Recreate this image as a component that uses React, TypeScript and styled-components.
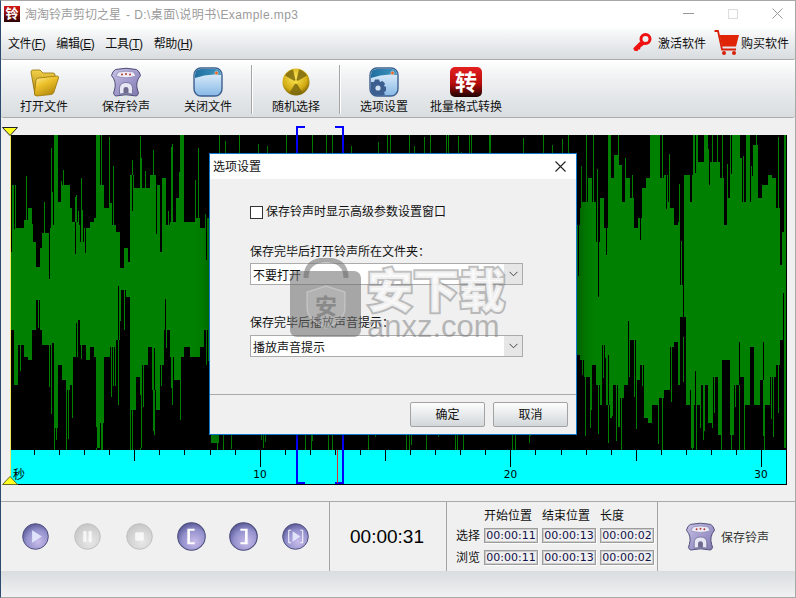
import styled, { createGlobalStyle } from 'styled-components';

const GlobalStyle = createGlobalStyle`
  html, body { margin: 0; padding: 0; background: #f0f0f0; }
  * { box-sizing: border-box; }
  body { font-family: "Liberation Sans", "Noto Sans CJK SC", sans-serif; font-size: 12px; color: #111; }
`

const Window = styled.div`
  position: relative;
  width: 796px;
  height: 598px;
  display: flex;
  flex-direction: column;
  overflow: hidden;
  background: #f0f0f0;
  border: 1px solid #a8a8a8;
  border-left-color: #2c4a6e;
`
const TitleBar = styled.div`
  height: 25px;
  flex: none;
  display: flex;
  align-items: center;
  padding-left: 3px;
  background: #fff;
  color: #9b9b9b;
  font-size: 12px;
`
const Logo = styled.div`
  width: 16px;
  height: 16px;
  margin-right: 5px;
  display: flex;
  align-items: center;
  justify-content: center;
  background: linear-gradient(#d81818, #2a0000);
  color: #fff;
  font-size: 13px;
  font-weight: 700;
  line-height: 16px;
`
const TitlePath = styled.span`
  margin-left: 5px;
  letter-spacing: 0.42px;
`
const WinControls = styled.div`
  margin-left: auto;
  display: flex;
  align-items: center;
  padding-right: 12px;
  gap: 34px;
`
const MenuBar = styled.div`
  height: 34px;
  flex: none;
  display: flex;
  align-items: center;
  padding: 0 6px 0 7px;
  background: linear-gradient(#fff, #f1f3f4 30%, #d9dde0);
  border-bottom: 1px solid #a9abad;
  border-radius: 0 0 2px 2px;
`
const MenuItem = styled.span`
  margin-right: 11px;
  font-size: 12px;
  letter-spacing: -0.4px;
  white-space: nowrap;
  u { text-underline-offset: 1px; }
`
const MenuRight = styled.div`
  margin-left: auto;
  display: flex;
  align-items: center;
`
const LinkIcon = styled.span`
  display: flex;
  margin: 0 ${p => p.$gap ?? 6}px 0 ${p => p.$before ?? 0}px;
`
const ToolBar = styled.div`
  height: 58px;
  flex: none;
  display: flex;
  padding-left: 2px;
  background: linear-gradient(#fff, #eef0f1 35%, #d9dde0);
  border-bottom: 1px solid #a9abad;
  border-radius: 0 0 3px 3px;
`
const ToolButton = styled.div`
  width: 82px;
  display: flex;
  flex-direction: column;
  align-items: center;
  padding-top: 7px;
  font-size: 12px;
  line-height: 16px;
  white-space: nowrap;
  svg { display: block; margin-bottom: 2px; }
`
const ToolSep = styled.div`
  width: 2px;
  margin: 5px 2px 3px;
  background: linear-gradient(90deg, #a4a6a8 50%, #fff 50%);
`
const Stage = styled.div`
  flex: 1;
  padding: 17px 0 0 9px;
`
const Timeline = styled.div`
  position: relative;
  width: 777px;
`
const WaveSvg = styled.svg`
  display: block;
  background: #000;
`
const Ruler = styled.svg`
  display: block;
  background: #00ffff;
  border-right: 1px solid #000;
  border-bottom: 1px solid #000;
  font-family: "DejaVu Sans", sans-serif;
`
const StartLine = styled.div`
  position: absolute;
  left: 0;
  top: 0;
  width: 1px;
  height: 341px;
  background: #f0e860;
`
const Bracket = styled.div`
  position: absolute;
  top: -9px;
  left: ${p => p.$left}px;
  width: 9px;
  height: 358px;
  border: solid #0000ff;
  border-width: 2px 0;
  border-${p => p.$side}-width: 2px;
`
const PlayHead = styled.div`
  position: absolute;
  left: 327px;
  top: 315px;
  width: 1px;
  height: 33px;
  background: #e03030;
`
const Marker = styled.svg`
  position: absolute;
  left: -8px;
  top: ${p => p.$top}px;
`
const Footer = styled.div`
  height: 70px;
  flex: none;
  display: flex;
  border-top: 1px solid #a9a9a9;
`
const Section = styled.div`
  display: flex;
  align-items: center;
  width: ${p => p.$width}px;
  border-right: 1px solid #a4a4a4;
  &:last-child { border-right: 0; flex: 1; }
`
const Transport = styled(Section)`
  padding-left: 8px;
`
const TransportCell = styled.div`
  width: 52px;
  display: flex;
  justify-content: center;
`
const Clock = styled(Section)`
  justify-content: center;
  font-size: 19px;
  color: #000;
  padding-right: 2px;
`
const InfoGrid = styled(Section)`
  display: grid;
  grid-template-columns: 24px 54px 54px 54px;
  grid-template-rows: 18px 19px 19px;
  column-gap: 4px;
  row-gap: 3px;
  align-content: start;
  padding: 3px 0 0 9px;
`
const ColHead = styled.span`
  align-self: end;
  line-height: 14px;
  font-size: 12px;
  white-space: nowrap;
`
const RowHead = styled.span`
  line-height: 19px;
  margin-top: 1px;
  font-size: 12px;
  white-space: nowrap;
`
const TimeField = styled.div`
  display: flex;
  align-items: center;
  justify-content: center;
  font-family: "DejaVu Sans", sans-serif;
  font-size: 11px;
  color: #10104a;
  border: 1px solid #9c9c9c;
  box-shadow: inset 0 0 0 1px #cdcdcd, 1px 1px 0 #fff;
`
const SaveAction = styled(Section)`
  padding-left: 28px;
  gap: 6px;
  color: #333;
  font-size: 12px;
`
const StatusBar = styled.div`
  height: 26px;
  flex: none;
  background: linear-gradient(#d9dde0, #f0f1f2);
`
const Dialog = styled.div`
  position: absolute;
  left: 208px;
  top: 152px;
  width: 368px;
  height: 282px;
  display: flex;
  flex-direction: column;
  background: #f0f0f0;
  border: 1px solid #0f78cf;
  box-shadow: 2px 1px 15px rgba(0, 0, 0, 0.4);
`
const DialogTitle = styled.div`
  height: 25px;
  flex: none;
  display: flex;
  align-items: center;
  justify-content: space-between;
  padding: 0 9px 3px 3px;
  background: #fff;
  font-size: 12px;
  svg { margin-top: 3px; }
`
const DialogBody = styled.div`
  flex: 1;
  display: flex;
  flex-direction: column;
  padding: 26px 0 0 40px;
`
const CheckRow = styled.label`
  display: flex;
  align-items: center;
  height: 14px;
  gap: 3px;
  line-height: 14px;
`
const CheckBox = styled.span`
  width: 13px;
  height: 13px;
  background: #fff;
  border: 1px solid #333;
`
const FieldLabel = styled.div`
  height: 14px;
  line-height: 14px;
  margin-top: ${p => p.$top}px;
  white-space: nowrap;
`
const Select = styled.div`
  width: 273px;
  height: 22px;
  margin-top: ${p => p.$top}px;
  display: flex;
  align-items: center;
  justify-content: space-between;
  padding-left: 2px;
  background: #fff;
  border: 1px solid #ababab;
`
const SelectArrow = styled.span`
  width: 18px;
  height: 20px;
  display: flex;
  align-items: center;
  justify-content: center;
  background: #e6e6e6;
`
const DialogFooter = styled.div`
  height: 40px;
  flex: none;
  display: flex;
  justify-content: flex-end;
  gap: 8px;
  padding: 7px 8px 0 0;
  border-top: 1px solid #a9a9a9;
`
const DialogButton = styled.div`
  width: 75px;
  height: 25px;
  display: flex;
  align-items: center;
  justify-content: center;
  padding-bottom: 2px;
  background: linear-gradient(#fdfdfd, #d2d7da);
  border: 1px solid #a3a3a3;
  border-radius: 2px;
`
const Watermark = styled.div`
  position: absolute;
  left: 80px;
  top: 104px;
  display: flex;
  gap: 5px;
  pointer-events: none;
`
const WatermarkText = styled.div`
  display: flex;
  flex-direction: column;
  margin-top: 8px;
`
const WatermarkCn = styled.div`
  font-size: 46px;
  line-height: 50px;
  font-weight: 900;
  white-space: nowrap;
  color: rgba(250, 250, 250, 0.85);
  paint-order: stroke fill;
  -webkit-text-stroke: 4px rgba(130, 130, 130, 0.5);
`
const WatermarkEn = styled.div`
  margin-top: -3px;
  font-size: 31px;
  line-height: 28px;
  color: rgba(120, 120, 120, 0.5);
`

// envelope of the waveform read off the reference crops (crop px / 3 + crop origin)
const scaled = (ox: number, oy: number, pts: number[]) => {
  const out: [number, number][] = []
  for (let i = 0; i < pts.length; i += 2) out.push([ox + pts[i] / 3 - 10, oy + pts[i + 1] / 3 - 135])
  return out
}
const topKnots = [
  ...scaled(0, 125, [30,380,35,180,45,310,60,310,70,285,80,250,95,350,105,425,115,370,125,325,145,310,155,300,160,30,165,30,170,230,185,180,195,180,205,250,215,290,230,300,240,350,250,310,270,290,280,280,285,30,292,30,295,180,310,250,325,235,335,300,345,320,360,430,370,370,380,410,390,150,400,190,415,100,425,190,445,150,465,180,475,380,485,160,495,300,510,290,525,220,540,30,550,290,565,290,585,280,600,310,615,280,625,100]),
  [210, 90], [566, 90],
  ...scaled(575, 125, [10,250,20,230,35,160,50,230,60,350,70,220,85,310,95,30,105,160,115,90,125,120,140,230,150,160,165,220,175,310,185,280,200,190,210,160,225,30,240,30,250,160,265,150,275,230,285,250,295,300,305,290,315,480,325,150,340,230,350,30,365,110,385,30,395,180,405,110,420,110,435,160,445,300,455,220,465,30,480,30,490,100,500,230,510,30,520,230,530,60,545,220,560,180,575,150,590,160,600,250,610,420,620,320,626,30,636,30]),
] as [number, number][]
const botKnots = [
  ...scaled(0, 290, [30,120,40,285,50,165,60,165,70,200,80,210,95,120,105,30,115,120,125,165,145,165,155,160,160,415,170,225,185,270,195,300,205,285,215,200,230,90,240,165,255,210,270,170,280,200,285,475,295,400,310,200,325,170,345,150,360,0,375,20,390,360,405,260,415,475,425,225,440,170,455,300,465,360,475,225,490,120,505,200,520,270,535,200,550,170,565,200,580,200,595,170,610,120,625,460]),
  [210, 220], [566, 220],
  ...scaled(575, 290, [10,210,25,260,40,360,50,225,60,285,70,345,80,165,90,345,100,385,110,285,125,410,135,325,145,285,155,260,165,150,180,270,190,225,205,385,215,400,230,345,245,325,265,300,280,170,295,155,305,285,315,80,330,345,345,475,355,345,375,285,395,400,410,260,425,435,440,210,460,435,475,285,490,260,505,345,520,170,535,345,550,270,565,345,580,260,600,225,615,150,626,475,636,475]),
] as [number, number][]

// sample and hold, the wave is blocky and has no slopes
const hold = (knots: [number, number][], x: number) => {
  for (let i = 1; i < knots.length; i++) {
    if (x < knots[i][0]) return knots[i - 1][1]
  }
  return knots[knots.length - 1][1]
}

const buildWave = () => {
  let seed = 20
  const rnd = () => {
    seed = (seed * 16807) % 2147483647
    return seed / 2147483647
  }
  let green = ''
  let black = ''
  for (let x = 0; x < 776; x += 2) {
    const hidden = x > 200 && x < 566
    const top = Math.round(hold(topKnots, x))
    const bot = Math.round(hold(botKnots, x))
    green += `M${x} ${top}h2V${bot}h-2Z`
    const sx = x + (rnd() < 0.5 ? 0 : 1)
    const reach = hidden ? 110 : 70
    if (rnd() < 0.3) {
      const t = Math.max(0, top - 12 - rnd() * reach)
      green += `M${sx} ${Math.round(t)}h1V${top}h-1Z`
    }
    if (rnd() < 0.3) {
      const b = Math.min(315, bot + 12 + rnd() * reach)
      green += `M${sx} ${bot}h1V${Math.round(b)}h-1Z`
    }
    if (rnd() < 0.07) black += `M${sx} ${top}h1v${Math.round(20 + rnd() * 40)}h-1Z`
    if (rnd() < 0.07) {
      const n = Math.round(20 + rnd() * 40)
      black += `M${sx} ${bot - n}h1v${n}h-1Z`
    }
  }
  return { green, black }
}
const wave = buildWave()

const secondPx = 25.07
const ticks = Array.from({ length: 31 }, (_, i) => i + 1)

const FolderIcon = () => (
  <svg width="30" height="30" viewBox="0 0 30 30">
    <defs>
      <linearGradient id="fb" x1="0" y1="0" x2="0" y2="1"><stop offset="0" stopColor="#f4d24a" /><stop offset="1" stopColor="#a87c08" /></linearGradient>
      <linearGradient id="ff" x1="0" y1="0" x2="0.6" y2="1"><stop offset="0" stopColor="#fff0a0" /><stop offset="0.45" stopColor="#eec22c" /><stop offset="1" stopColor="#b48a0c" /></linearGradient>
    </defs>
    <path d="M2 5 Q2 3 4 3 H11 L14 6 H24 Q26 6 26 8 V12 L8 28 H6 Z" fill="url(#fb)" stroke="#927008" strokeWidth=".8" />
    <path d="M7 13 Q8 11 10 11 L28 9 Q30 9 29.5 11 L25 25 Q24.5 27 22 27.5 L8 29 Q5 29 5.5 26 Z" fill="url(#ff)" stroke="#9a7608" strokeWidth=".8" />
  </svg>
)

const SaveIcon = ({ size = 30, id = 'sv' }: { size?: number; id?: string }) => (
  <svg width={size} height={size} viewBox="0 0 30 30">
    <defs>
      <linearGradient id={id} x1="0" y1="0" x2="1" y2="1"><stop offset="0" stopColor="#c8c2e6" /><stop offset="0.6" stopColor="#9c94c8" /><stop offset="1" stopColor="#7c76ac" /></linearGradient>
    </defs>
    <path d="M4.500 2.500 Q15 0 25.500 2.500 Q28.500 4 29.500 8.500 Q24 15 26.500 23 Q29 27 25.500 29 Q15 26.500 4.500 29 Q1 27 3.500 23 Q6 15 .5 8.500 Q1.500 4 4.500 2.500Z" fill={`url(#${id})`} stroke="#4e4e76" strokeWidth="1" />
    <path d="M7.500 5 Q15 3.500 22.500 5 L25 9 Q15 12.500 5 9Z" fill="#eeecf8" stroke="#7c7ca4" strokeWidth=".6" />
    <circle cx="11" cy="7.500" r="1" fill="#b83a30" /><circle cx="15" cy="7" r="1" fill="#b83a30" /><circle cx="19" cy="7.500" r="1" fill="#b83a30" />
    <path d="M8.500 27 V21.500 Q8.500 15.500 15 15.500 Q21.500 15.500 21.500 21.500 V27 Q15 25.500 8.500 27Z" fill="#e8e6f4" stroke="#6a6a92" strokeWidth=".8" />
    <path d="M12.500 26 V22 Q12.500 20 15 20 Q17.500 20 17.500 22 V26Z" fill="#6e6a8e" />
  </svg>
)

const PaneIcon = ({ id, gear }: { id: string; gear?: boolean }) => (
  <svg width="30" height="30" viewBox="0 0 30 30">
    <defs>
      <linearGradient id={`${id}a`} x1="0" y1="0" x2="1" y2="0"><stop offset="0" stopColor="#1f6f9e" /><stop offset="1" stopColor="#3f97c2" /></linearGradient>
      <linearGradient id={`${id}b`} x1="0" y1="0" x2="0" y2="1"><stop offset="0" stopColor="#eef7fe" /><stop offset="1" stopColor="#86b8e6" /></linearGradient>
    </defs>
    <rect x="1" y="1" width="28" height="28" rx="7" fill={`url(#${id}b)`} stroke="#3d5f8e" strokeWidth="1.400" />
    <path d="M2 11 V8 Q2 2 8 2 H22 Q28 2 28 8 Q15 6 2 11Z" fill={`url(#${id}a)`} />
    <circle cx="23.500" cy="6" r="1.800" fill="#e86a28" stroke="#fff" strokeWidth=".4" />
    {gear && (
      <g fill="#3c5f90">
        <path d="M2 15 H5 L6 12.500 H10 L11 15 L13.500 14 L16 16.500 L15 19 L17 20 V24 L15 25 L16 27.500 L13 28.500 H8 Q2 28.500 2 23Z" />
        <circle cx="9" cy="21" r="2.600" fill="#cfe2f4" />
      </g>
    )}
  </svg>
)

const NukeIcon = () => (
  <svg width="30" height="30" viewBox="0 0 30 30">
    <defs>
      <radialGradient id="nk" cx="0.45" cy="0.35" r="0.7"><stop offset="0" stopColor="#ffe95a" /><stop offset="0.65" stopColor="#d2ac12" /><stop offset="1" stopColor="#6a5200" /></radialGradient>
    </defs>
    <circle cx="15" cy="15" r="13.500" fill="url(#nk)" />
    <g fill="#7d6a0e">
      <path d="M15 15 L26 8.500 A12.800 12.800 0 0 0 18 2.500Z" opacity=".85" />
      <path d="M15 15 L4 8.500 A12.800 12.800 0 0 1 12 2.500Z" opacity=".85" />
      <path d="M15 15 L21.500 26 A12.800 12.800 0 0 1 8.500 26Z" opacity=".85" />
    </g>
    <circle cx="15" cy="15" r="2" fill="#f4d83a" />
  </svg>
)

const ConvertIcon = () => (
  <svg width="32" height="30" viewBox="0 0 32 30">
    <defs>
      <linearGradient id="cv" x1="0" y1="0" x2="0" y2="1"><stop offset="0" stopColor="#e42020" /><stop offset="0.55" stopColor="#b80c0c" /><stop offset="1" stopColor="#1c0000" /></linearGradient>
    </defs>
    <rect x="0" y="0" width="32" height="30" rx="5" fill="url(#cv)" />
    <text x="16" y="23" textAnchor="middle" fontSize="22" fontWeight="700" fill="#fff" fontFamily="'Noto Sans CJK SC', sans-serif">转</text>
  </svg>
)

const KeyIcon = () => (
  <svg width="19" height="19" viewBox="0 0 19 19">
    <path d="M7.500 9 L1 15.500 L1.500 17 L4 17.500 L5 16 L6.500 16 L7 14 L11 11" fill="#f01010" stroke="#f01010" strokeWidth="1.200" />
    <circle cx="12.500" cy="6" r="4.500" fill="none" stroke="#f01010" strokeWidth="3" />
  </svg>
)

const CartIcon = () => (
  <svg width="25" height="26" viewBox="0 0 25 26">
    <path d="M0.500 1 H4 L8 19.500 H22" fill="none" stroke="#d82008" strokeWidth="1.800" />
    <path d="M5.500 5 H25 L22 16.500 H8Z" fill="#e02408" />
    <circle cx="10" cy="23" r="2" fill="#d82008" /><circle cx="20" cy="23" r="2" fill="#d82008" />
  </svg>
)

type Glyph = 'play' | 'pause' | 'stop' | 'open' | 'close' | 'preview'

const TransportButton = ({ glyph, off, big }: { glyph: Glyph; off?: boolean; big?: boolean }) => {
  const size = big ? 29 : 27
  const id = `tb${glyph}`
  return (
    <svg width={size} height={size} viewBox="0 0 28 28">
      <defs>
        <radialGradient id={id} cx="0.6" cy="0.7" r="0.75">
          <stop offset="0" stopColor={off ? '#e8e8e8' : '#c8bcea'} />
          <stop offset="0.6" stopColor={off ? '#d4d4d4' : '#9390cc'} />
          <stop offset="1" stopColor={off ? '#c4c4c4' : '#52528e'} />
        </radialGradient>
      </defs>
      <circle cx="14" cy="14" r="13.300" fill={`url(#${id})`} stroke={off ? '#c0c0c0' : '#4c4c7c'} strokeWidth="1" />
      <g fill="#fff" stroke="none" opacity={off ? 0.75 : 1}>
        {glyph === 'play' && <path d="M10.500 7.500 L20.500 14 L10.500 20.500Z" fill="#dfe4fb" />}
        {glyph === 'pause' && <><rect x="9.500" y="8" width="3.500" height="12" rx="1.700" /><rect x="15" y="8" width="3.500" height="12" rx="1.700" /></>}
        {glyph === 'stop' && <rect x="9.500" y="9.500" width="9" height="9" rx="1.500" />}
        {glyph === 'open' && <path d="M10 6.500 H17 V8.500 H12.500 V19.500 H17 V21.500 H10Z" />}
        {glyph === 'close' && <path d="M18 6.500 H11 V8.500 H15.500 V19.500 H11 V21.500 H18Z" />}
        {glyph === 'preview' && <>
          <path d="M11 8.500 L19 14 L11 19.500Z" fill="#dfe4fb" />
          <path d="M9.500 7.500 H7 V20.500 H9.500 M19 7.500 H21.500 V20.500 H19" fill="none" stroke="#fff" strokeWidth="1" />
        </>}
      </g>
    </svg>
  )
}

const Chevron = () => (
  <svg width="9" height="6" viewBox="0 0 9 6"><path d="M0.500 0.800 L4.500 4.800 L8.500 0.800" fill="none" stroke="#444" strokeWidth="1" /></svg>
)

const BagIcon = () => (
  <svg width="72" height="80" viewBox="0 0 72 80">
    <path d="M16 20 Q16 2 36 2 Q56 2 56 20" fill="none" stroke="rgba(120,120,120,.6)" strokeWidth="5" />
    <rect x="0" y="13" width="71" height="66" rx="7" fill="rgba(105,105,105,.55)" />
    <path d="M36 28 L55 34 V50 Q55 62 36 70 Q17 62 17 50 V34Z" fill="rgba(225,225,225,.22)" stroke="rgba(235,235,235,.35)" strokeWidth="1.500" />
    <text x="36" y="56" textAnchor="middle" fontSize="22" fontWeight="700" fill="rgba(110,110,110,.6)" fontFamily="'Noto Sans CJK SC', sans-serif">安</text>
  </svg>
)

export default function App() {
  return (
    <Window>
      <GlobalStyle />
      <TitleBar>
        <Logo>铃</Logo>
        <span>淘淘铃声剪切之星</span>
        <TitlePath>- D:\桌面\说明书\Example.mp3</TitlePath>
        <WinControls>
          <svg width="11" height="11" viewBox="0 0 11 11"><path d="M0 5.500 H11" stroke="#999" /></svg>
          <svg width="10" height="10" viewBox="0 0 10 10"><rect x=".5" y=".5" width="9" height="9" fill="none" stroke="#dcdcdc" /></svg>
          <svg width="11" height="11" viewBox="0 0 11 11"><path d="M.5 .5 L10.500 10.500 M10.500 .5 L.5 10.500" stroke="#999" /></svg>
        </WinControls>
      </TitleBar>
      <MenuBar>
        <MenuItem>文件(<u>F</u>)</MenuItem>
        <MenuItem>编辑(<u>E</u>)</MenuItem>
        <MenuItem>工具(<u>T</u>)</MenuItem>
        <MenuItem>帮助(<u>H</u>)</MenuItem>
        <MenuRight>
          <LinkIcon><KeyIcon /></LinkIcon>
          <span>激活软件</span>
          <LinkIcon $gap={2} $before={8}><CartIcon /></LinkIcon>
          <span>购买软件</span>
        </MenuRight>
      </MenuBar>
      <ToolBar>
        <ToolButton><FolderIcon />打开文件</ToolButton>
        <ToolButton><SaveIcon />保存铃声</ToolButton>
        <ToolButton><PaneIcon id="pc" />关闭文件</ToolButton>
        <ToolSep />
        <ToolButton><NukeIcon />随机选择</ToolButton>
        <ToolSep />
        <ToolButton><PaneIcon id="ps" gear />选项设置</ToolButton>
        <ToolButton><ConvertIcon />批量格式转换</ToolButton>
      </ToolBar>
      <Stage>
        <Timeline>
          <WaveSvg width="777" height="315" shapeRendering="crispEdges">
            <path d={wave.green} fill="#008000" />
            <path d={wave.black} fill="#000" />
          </WaveSvg>
          <Ruler width="777" height="35">
            {ticks.map(n => {
              const x = Math.round(n * secondPx)
              const h = n % 10 === 0 ? 17 : n % 5 === 0 ? 11 : 5
              return <line key={n} x1={x - 0.5} x2={x - 0.5} y1="0" y2={h} stroke="#000" />
            })}
            <text x="250" y="28" textAnchor="middle" fontSize="10.500">10</text>
            <text x="500.500" y="28" textAnchor="middle" fontSize="10.500">20</text>
            <text x="751" y="28" textAnchor="middle" fontSize="10.500">30</text>
            <text x="3" y="29" fontSize="12" fontFamily="'Noto Sans CJK SC', sans-serif">秒</text>
          </Ruler>
          <StartLine />
          <Bracket $left={286} $side="left" />
          <Bracket $left={325} $side="right" />
          <PlayHead />
          <Marker $top={-8} width="16" height="9" viewBox="0 0 16 9"><path d="M.5 .5 H15.500 L8 8.500Z" fill="#ffff20" stroke="#222" /></Marker>
          <Marker $top={341} width="16" height="9" viewBox="0 0 16 9"><path d="M.5 8.500 H15.500 L8 .5Z" fill="#ffff20" stroke="#6a6a20" /></Marker>
        </Timeline>
      </Stage>
      <Footer>
        <Transport $width={329}>
          <TransportCell><TransportButton glyph="play" /></TransportCell>
          <TransportCell><TransportButton glyph="pause" off /></TransportCell>
          <TransportCell><TransportButton glyph="stop" off /></TransportCell>
          <TransportCell><TransportButton glyph="open" big /></TransportCell>
          <TransportCell><TransportButton glyph="close" big /></TransportCell>
          <TransportCell><TransportButton glyph="preview" /></TransportCell>
        </Transport>
        <Clock $width={117}>00:00:31</Clock>
        <InfoGrid $width={211}>
          <span />
          <ColHead>开始位置</ColHead>
          <ColHead>结束位置</ColHead>
          <ColHead>长度</ColHead>
          <RowHead>选择</RowHead>
          <TimeField>00:00:11</TimeField>
          <TimeField>00:00:13</TimeField>
          <TimeField>00:00:02</TimeField>
          <RowHead>浏览</RowHead>
          <TimeField>00:00:11</TimeField>
          <TimeField>00:00:13</TimeField>
          <TimeField>00:00:02</TimeField>
        </InfoGrid>
        <SaveAction $width={138}><SaveIcon size={29} id="sv2" />保存铃声</SaveAction>
      </Footer>
      <StatusBar />
      <Dialog>
        <DialogTitle>
          <span>选项设置</span>
          <svg width="13" height="13" viewBox="0 0 13 13"><path d="M1.500 1.500 L11.500 11.500 M11.500 1.500 L1.500 11.500" stroke="#222" strokeWidth="1.100" /></svg>
        </DialogTitle>
        <DialogBody>
          <CheckRow><CheckBox />保存铃声时显示高级参数设置窗口</CheckRow>
          <FieldLabel $top={26}>保存完毕后打开铃声所在文件夹：</FieldLabel>
          <Select $top={4}>不要打开<SelectArrow><Chevron /></SelectArrow></Select>
          <FieldLabel $top={31}>保存完毕后播放声音提示：</FieldLabel>
          <Select $top={5}>播放声音提示<SelectArrow><Chevron /></SelectArrow></Select>
        </DialogBody>
        <DialogFooter>
          <DialogButton>确定</DialogButton>
          <DialogButton>取消</DialogButton>
        </DialogFooter>
        <Watermark>
          <BagIcon />
          <WatermarkText>
            <WatermarkCn>安下载</WatermarkCn>
            <WatermarkEn>anxz.com</WatermarkEn>
          </WatermarkText>
        </Watermark>
      </Dialog>
    </Window>
  )
}
